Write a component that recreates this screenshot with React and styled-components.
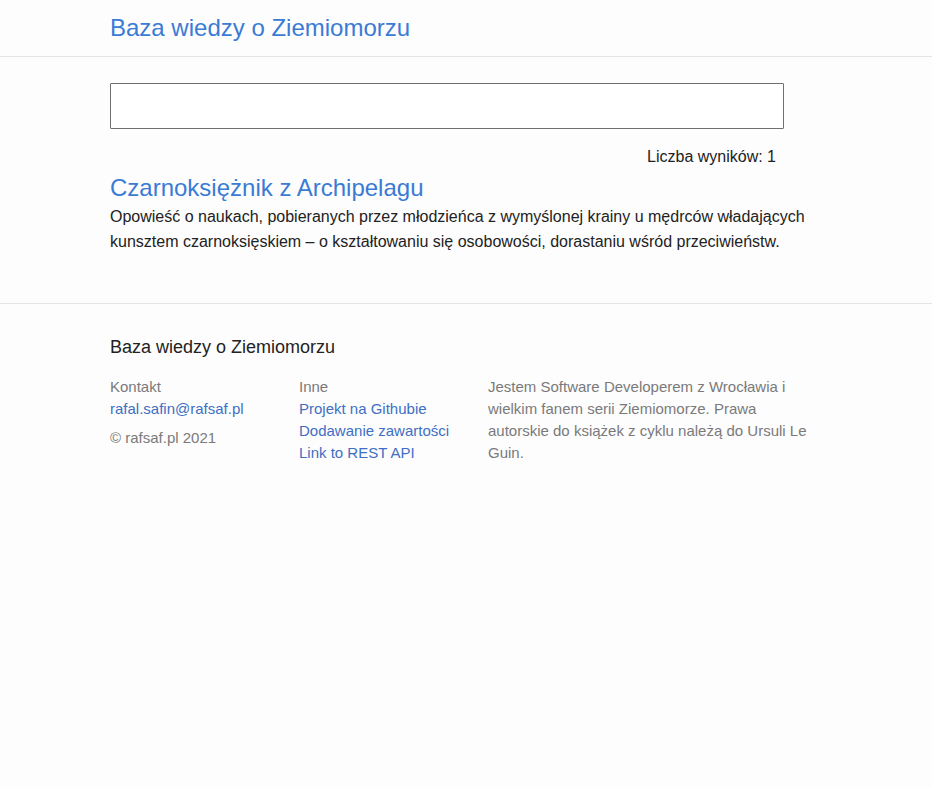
import React, { useState } from "react";
import styled, { createGlobalStyle } from "styled-components";

const GlobalStyle = createGlobalStyle`
	html, body {
		margin: 0;
		padding: 0;
		background: #fdfdfd;
		font-family: "Liberation Sans", Arial, sans-serif;
		color: #222;
	}
	* {
		box-sizing: border-box;
	}
`;

const results = [
	{
		title: "Czarnoksiężnik z Archipelagu",
		description:
			"Opowieść o naukach, pobieranych przez młodzieńca z wymyślonej krainy u mędrców władających kunsztem czarnoksięskiem – o kształtowaniu się osobowości, dorastaniu wśród przeciwieństw.",
	},
];

export default function App() {
	const [query, setQuery] = useState("");

	return (
		<>
			<GlobalStyle />
			<Page>
				<Header>
					<Container>
						<Brand href='#'>Baza wiedzy o Ziemiomorzu</Brand>
					</Container>
				</Header>
				<Main>
					<Container>
						<SearchInput
							value={query}
							onChange={(e) => setQuery(e.target.value)}
						/>
						<Count>Liczba wyników: {results.length}</Count>
						{results.map((item, index) => (
							<Result key={index}>
								<ResultTitle href='#'>{item.title}</ResultTitle>
								<ResultText>{item.description}</ResultText>
							</Result>
						))}
					</Container>
				</Main>
				<Footer>
					<Container>
						<FooterTitle>Baza wiedzy o Ziemiomorzu</FooterTitle>
						<FooterGrid>
							<FooterColumn>
								<FooterLabel>Kontakt</FooterLabel>
								<FooterLink href='#'>rafal.safin@rafsaf.pl</FooterLink>
								<Copyright>© rafsaf.pl 2021</Copyright>
							</FooterColumn>
							<FooterColumn>
								<FooterLabel>Inne</FooterLabel>
								<FooterLink href='#'>Projekt na Githubie</FooterLink>
								<FooterLink href='#'>Dodawanie zawartości</FooterLink>
								<FooterLink href='#'>Link to REST API</FooterLink>
							</FooterColumn>
							<FooterColumn>
								<FooterLabel>
									Jestem Software Developerem z Wrocławia i wielkim fanem serii
									Ziemiomorze. Prawa autorskie do książek z cyklu należą do
									Ursuli Le Guin.
								</FooterLabel>
							</FooterColumn>
						</FooterGrid>
					</Container>
				</Footer>
			</Page>
		</>
	);
}

const Page = styled.div`
	min-height: 787px;
	background: #fdfdfd;
`;

const Container = styled.div`
	width: 712px;
	margin: 0 auto;
`;

const Header = styled.header`
	height: 57px;
	border-bottom: 1px solid #e4e4e4;
	display: flex;
	align-items: center;
`;

const Brand = styled.a`
	display: block;
	margin-top: -1px;
	font-size: 24px;
	color: #3a7bd5;
	text-decoration: none;
`;

const Main = styled.main`
	padding: 26px 0 49px;
	border-bottom: 1px solid #e4e4e4;
`;

const SearchInput = styled.input`
	display: block;
	width: 674px;
	height: 46px;
	border: 1px solid #707070;
	border-radius: 1px;
	background: #fff;
	padding: 0 12px;
	font-size: 16px;
	font-family: inherit;
	outline: none;
`;

const Count = styled.div`
	width: 666px;
	text-align: right;
	margin-top: 19px;
	font-size: 16px;
	line-height: 18px;
	color: #222;
`;

const Result = styled.div`
	margin-top: 7px;
`;

const ResultTitle = styled.a`
	display: block;
	font-size: 24px;
	line-height: 30px;
	color: #3a7bd5;
	text-decoration: none;
`;

const ResultText = styled.p`
	margin: 1px 0 0;
	font-size: 16px;
	line-height: 25px;
	color: #222;
`;

const Footer = styled.footer`
	padding: 33px 0 40px;
`;

const FooterTitle = styled.h3`
	margin: 0 0 18px;
	font-size: 18px;
	font-weight: normal;
	color: #222;
`;

const FooterGrid = styled.div`
	display: grid;
	grid-template-columns: 189px 189px 324px;
`;

const FooterColumn = styled.div`
	display: flex;
	flex-direction: column;
	font-size: 15px;
	line-height: 22px;
`;

const FooterLabel = styled.span`
	color: #7a7a7a;
`;

const FooterLink = styled.a`
	color: #3d6fc4;
	text-decoration: none;
`;

const Copyright = styled.span`
	margin-top: 7px;
	color: #7a7a7a;
`;
